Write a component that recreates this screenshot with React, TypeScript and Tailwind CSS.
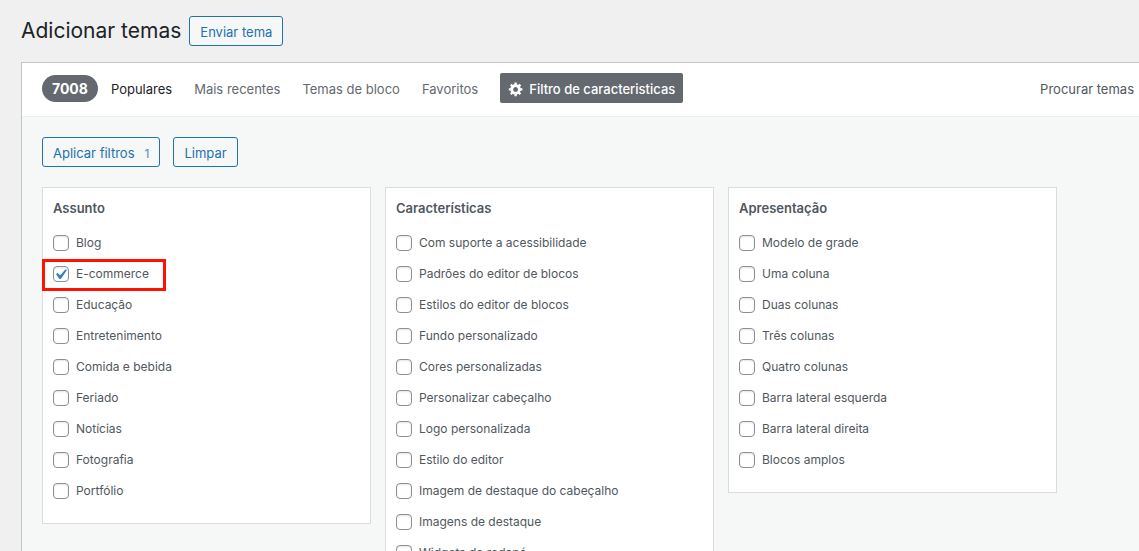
import clsx from 'clsx';
import { useState } from 'react';

const tabs = ['Populares', 'Mais recentes', 'Temas de bloco', 'Favoritos'];

const groups = [
  {
    title: 'Assunto',
    items: [
      'Blog',
      'E-commerce',
      'Educação',
      'Entretenimento',
      'Comida e bebida',
      'Feriado',
      'Notícias',
      'Fotografia',
      'Portfólio',
    ],
  },
  {
    title: 'Características',
    items: [
      'Com suporte a acessibilidade',
      'Padrões do editor de blocos',
      'Estilos do editor de blocos',
      'Fundo personalizado',
      'Cores personalizadas',
      'Personalizar cabeçalho',
      'Logo personalizada',
      'Estilo do editor',
      'Imagem de destaque do cabeçalho',
      'Imagens de destaque',
      'Widgets de rodapé',
    ],
  },
  {
    title: 'Apresentação',
    items: [
      'Modelo de grade',
      'Uma coluna',
      'Duas colunas',
      'Três colunas',
      'Quatro colunas',
      'Barra lateral esquerda',
      'Barra lateral direita',
      'Blocos amplos',
    ],
  },
];

const outlineButton =
  'h-[30px] rounded-[3px] border border-[#2271b1] bg-[#f6f7f7] px-2.5 pt-px text-[13px] leading-5 whitespace-nowrap text-[#2271b1] cursor-pointer';

function GearIcon() {
  return (
    <svg viewBox="0 0 20 20" className="size-4 fill-white" aria-hidden="true">
      <path d="M18 12h-2.18c-.17.7-.44 1.35-.81 1.93l1.54 1.54-2.1 2.1-1.54-1.54c-.58.36-1.23.63-1.91.79V19H8v-2.18c-.68-.16-1.33-.43-1.91-.79l-1.54 1.54-2.12-2.12 1.54-1.54c-.36-.58-.63-1.23-.79-1.91H1V9.03h2.17c.16-.7.44-1.35.8-1.94L2.43 5.55l2.1-2.1 1.54 1.54c.58-.37 1.24-.64 1.93-.81V2h3v2.18c.68.16 1.33.43 1.91.79l1.54-1.54 2.12 2.12-1.54 1.54c.36.59.64 1.24.8 1.94H18V12zm-8.5 1.5c1.66 0 3-1.34 3-3s-1.34-3-3-3-3 1.34-3 3 1.34 3 3 3z" />
    </svg>
  );
}

function FilterItem({
  label,
  checked,
  onChange,
}: {
  label: string;
  checked: boolean;
  onChange: () => void;
}) {
  return (
    <li className="relative flex h-4">
      <label className="flex items-center gap-[7px] text-xs leading-4">
        <span className="relative size-4 shrink-0">
          <input
            type="checkbox"
            checked={checked}
            onChange={onChange}
            className="block size-4 appearance-none rounded-[4px] border border-[#8c8f94] bg-white shadow-[inset_0_1px_2px_rgba(0,0,0,0.1)]"
          />
          {checked && (
            <svg
              viewBox="0 0 20 20"
              className="pointer-events-none absolute -top-0.5 -left-[3px] size-[21px] max-w-none fill-[#3582c4]"
              aria-hidden="true"
            >
              <path d="M14.83 4.89l1.34.94-5.81 8.38H9.02L5.78 9.67l1.34-1.25 2.57 2.4z" />
            </svg>
          )}
        </span>
        {label}
      </label>
      {label === 'E-commerce' && (
        <span className="pointer-events-none absolute -top-[7px] -left-[11px] h-8 w-[124px] border-3 border-[#ff1200]" />
      )}
    </li>
  );
}

export default function App() {
  const [selected, setSelected] = useState<string[]>(['E-commerce']);

  const toggle = (item: string) =>
    setSelected((prev) =>
      prev.includes(item) ? prev.filter((i) => i !== item) : [...prev, item],
    );

  return (
    <div className="min-h-screen bg-[#f0f0f0] pl-[21px] font-['Inter',sans-serif] text-[13px] leading-5 text-[#50575e]">
      <header className="flex items-center gap-2 py-4">
        <h1 className="text-[21px] leading-[30px] whitespace-nowrap text-[#1d2327]">
          Adicionar temas
        </h1>
        <button type="button" className={outlineButton}>
          Enviar tema
        </button>
      </header>

      <main className="border-t border-l border-[#c3c4c7] bg-[#f6f7f7]">
        <div className="flex items-center justify-between border-b border-[#f0f0f1] bg-white pt-2.5 pr-[5px] pb-[13px] pl-5">
          <div className="flex items-center">
            <span className="mr-[13px] rounded-full bg-[#646970] px-2.5 text-sm leading-[27px] font-bold text-white">
              7008
            </span>
            <nav className="flex gap-[22px] pt-px">
              {tabs.map((tab, i) => (
                <a
                  key={tab}
                  href="#"
                  className={clsx(
                    'whitespace-nowrap',
                    i === 0 ? 'text-[#1d2327]' : 'text-[#646970]',
                  )}
                >
                  {tab}
                </a>
              ))}
            </nav>
            <button
              type="button"
              className="ml-[22px] flex h-[30px] cursor-pointer items-center gap-[5px] rounded-[2px] bg-[#646970] px-2 pt-px font-medium whitespace-nowrap text-white"
            >
              <GearIcon />
              Filtro de caracteristicas
            </button>
          </div>
          <a href="#" className="pt-px whitespace-nowrap">
            Procurar temas
          </a>
        </div>

        <div className="py-5 pr-[82px] pl-5">
          <div className="mb-5 flex gap-[13px]">
            <button type="button" className={outlineButton}>
              Aplicar filtros
              <span className="ml-2.5 text-xs opacity-80">
                {selected.length}
              </span>
            </button>
            <button
              type="button"
              className={outlineButton}
              onClick={() => setSelected([])}
            >
              Limpar
            </button>
          </div>

          <div className="grid grid-cols-3 items-start gap-[14px]">
            {groups.map((group) => (
              <section
                key={group.title}
                className="border border-[#dcdcde] bg-white px-2.5 pt-2.5 pb-6"
              >
                <h2 className="mb-[17px] leading-5 font-semibold">
                  {group.title}
                </h2>
                <ul className="flex flex-col gap-[15px]">
                  {group.items.map((item) => (
                    <FilterItem
                      key={item}
                      label={item}
                      checked={selected.includes(item)}
                      onChange={() => toggle(item)}
                    />
                  ))}
                </ul>
              </section>
            ))}
          </div>
        </div>
      </main>
    </div>
  );
}
